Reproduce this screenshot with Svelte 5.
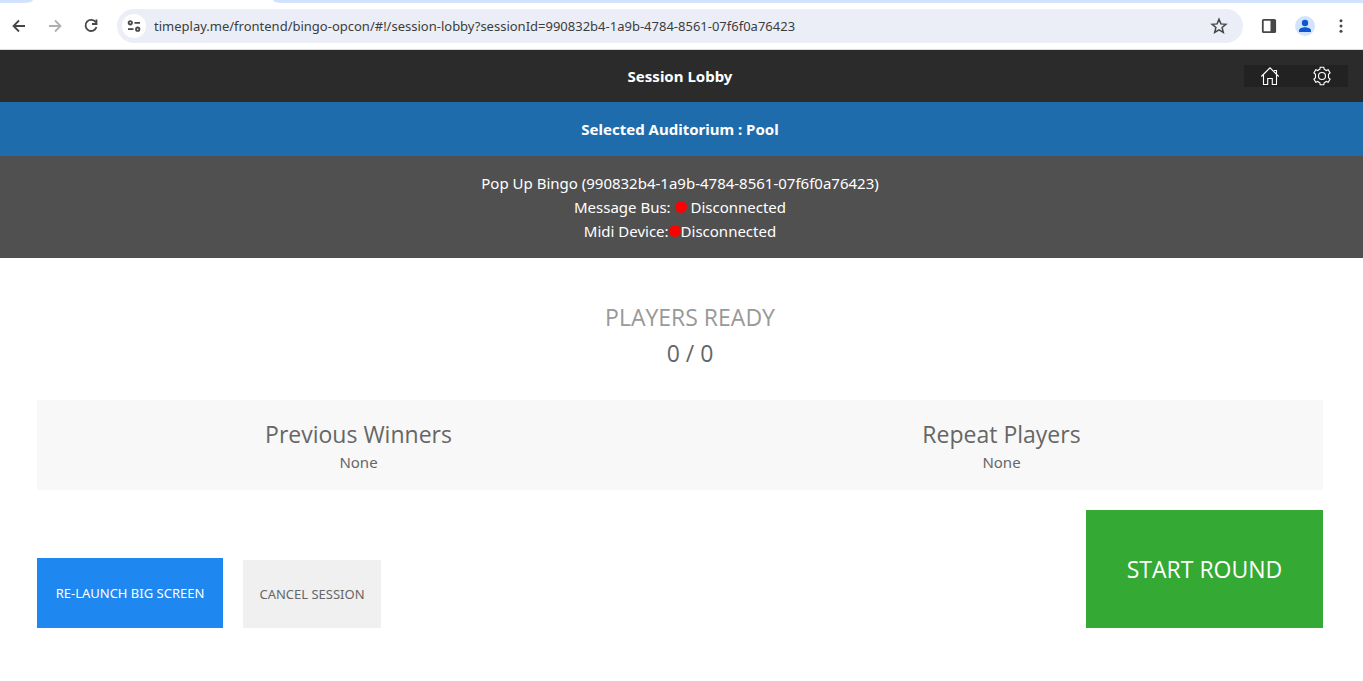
<script>
  const sessionId = '990832b4-1a9b-4784-8561-07f6f0a76423';
  const auditorium = 'Pool';
  const groups = [
    { title: 'Previous Winners', value: 'None' },
    { title: 'Repeat Players', value: 'None' }
  ];
  let url = $state(`timeplay.me/frontend/bingo-opcon/#!/session-lobby?sessionId=${sessionId}`);
</script>

<div class="browser">
  <div class="tabs">
    <div class="tab before"></div>
    <div class="tab current"></div>
    <div class="tab after"></div>
  </div>
  <div class="toolbar">
    <div class="nav">
      <button aria-label="Back">
        <svg width="16" height="16" viewBox="0 0 16 16"><path d="M14 8H3M8 2.5 2.5 8 8 13.5" /></svg>
      </button>
      <button aria-label="Forward" class="dim">
        <svg width="16" height="16" viewBox="0 0 16 16"><path d="M2 8h11M8 2.5 13.5 8 8 13.5" /></svg>
      </button>
      <button aria-label="Reload">
        <svg width="16" height="16" viewBox="0 0 16 16"><path d="M12.8 4.3A5.6 5.6 0 1 0 13.5 9M13.5 1.5V6H9" /></svg>
      </button>
    </div>
    <div class="address">
      <button class="site" aria-label="View site information">
        <svg width="14" height="14" viewBox="0 0 14 14"><circle cx="3.3" cy="3.8" r="1.7" /><path d="M7.5 3.8H13M1 10.2h5.5" /><circle cx="10.7" cy="10.2" r="1.7" /></svg>
      </button>
      <input type="text" aria-label="Address" spellcheck="false" bind:value={url} />
      <button class="star" aria-label="Bookmark this tab">
        <svg width="18" height="18" viewBox="0 0 18 18"><path d="m9 2.2 1.9 4.7 5 .4-3.8 3.2 1.2 4.9L9 12.8l-4.3 2.6 1.2-4.9L2.1 7.3l5-.4z" /></svg>
      </button>
    </div>
    <div class="tools">
      <button aria-label="Side panel">
        <svg width="16" height="16" viewBox="0 0 16 16"><rect x="1.8" y="1.8" width="12.4" height="12.4" rx="0.8" /><path class="solid" d="M9.5 2h4.5v12H9.5z" /></svg>
      </button>
      <button aria-label="Profile">
        <svg width="20" height="20" viewBox="0 0 20 20"><circle class="halo" cx="10" cy="10" r="10" /><circle class="person" cx="10" cy="7" r="3.2" /><path class="person" d="M4 16v-1.5c0-2.300 3.500-3.300 6-3.300s6 1 6 3.300V16z" /></svg>
      </button>
      <button aria-label="Menu">
        <svg width="16" height="16" viewBox="0 0 16 16"><circle class="dot3" cx="8" cy="2.700" r="1.500" /><circle class="dot3" cx="8" cy="8" r="1.500" /><circle class="dot3" cx="8" cy="13.300" r="1.500" /></svg>
      </button>
    </div>
  </div>
</div>

<header>
  <h1>Session Lobby</h1>
  <nav>
    <button aria-label="Home">
      <svg width="20" height="20" viewBox="0 0 20 20"><path d="M1.300 10.500 10 1.800l8.700 8.700M3.500 9v9.500h4.200v-6h4.600v6h4.200V9M14 4.500h2.500v3.500" /></svg>
    </button>
    <button aria-label="Settings">
      <svg width="20" height="20" viewBox="0 0 20 20"><circle cx="10" cy="10" r="3.500" /><path d="M7.800 3.300 8.200 1.300h3.600l.4 2q1 .4 2 1.200l2-.8 1.900 3.200-1.600 1.400v3.400l1.600 1.400-1.900 3.200-2-.8q-1 .8-2 1.200l-.4 2H8.200l-.4-2q-1-.4-2-1.200l-2 .8-1.900-3.200 1.600-1.400V8.300L1.900 6.900l1.900-3.200 2 .8q1-.8 2-1.200z" /></svg>
    </button>
  </nav>
</header>

<h2 class="auditorium">Selected Auditorium : {auditorium}</h2>

<section class="status">
  <div>Pop Up Bingo ({sessionId})</div>
  <div>Message Bus: <i class="light"></i> Disconnected</div>
  <div>Midi Device:<i class="light"></i>Disconnected</div>
</section>

<main>
  <section class="ready">
    <h2>PLAYERS READY</h2>
    <p>0 / 0</p>
  </section>

  <section class="groups">
    {#each groups as group}
      <div>
        <h3>{group.title}</h3>
        <p>{group.value}</p>
      </div>
    {/each}
  </section>

  <div class="actions">
    <button class="relaunch">RE-LAUNCH BIG SCREEN</button>
    <button class="cancel">CANCEL SESSION</button>
    <button class="start">START ROUND</button>
  </div>
</main>

<style>
  :global(body) {
    background: #fff;
    color: #666;
    font: 15px/24px 'Segoe UI', 'Noto Sans', 'Open Sans', sans-serif;
  }
  h1, h2, h3, p { margin: 0; font-weight: 400; }
  button {
    border: 0;
    padding: 0;
    background: none;
    color: inherit;
    font: inherit;
    cursor: pointer;
  }
  svg { display: block; fill: none; stroke: currentColor; stroke-width: 1.8; }

  .browser { color: #474747; background: #fff; border-bottom: 1px solid #dcdcdc; }
  .tabs { display: flex; height: 3px; background: #fff; }
  .tab { background: #d3e3fd; }
  .before { width: 33px; border-bottom-right-radius: 8px 3px; }
  .current { width: 240px; background: #fff; }
  .after { flex: 1; border-bottom-left-radius: 8px 3px; }
  .toolbar {
    display: flex;
    align-items: center;
    height: 46px;
    box-sizing: border-box;
    padding: 0 14px 0 11px;
  }
  .nav { display: flex; gap: 20px; }
  .dim { color: #b0b0b0; }
  .address {
    display: flex;
    align-items: center;
    flex: 1;
    height: 34px;
    margin: 0 18px;
    padding: 0 15px 0 5px;
    box-sizing: border-box;
    border-radius: 17px;
    background: #ebeef7;
  }
  .site {
    display: grid;
    place-items: center;
    width: 24px;
    height: 24px;
    border-radius: 50%;
    background: #fff;
  }
  input {
    flex: 1;
    min-width: 0;
    border: 0;
    padding: 0 8px;
    outline: 0;
    background: none;
    color: #3c3d40;
    font: 13px/20px 'Segoe UI', 'Noto Sans', 'Open Sans', sans-serif;
  }
  .star svg { stroke-width: 1.5; }
  .tools { display: flex; align-items: center; gap: 18px; }
  .solid, .dot3 { fill: currentColor; stroke: none; }
  .halo { fill: #d3e3fd; stroke: none; }
  .person { fill: #0b57d0; stroke: none; }

  header {
    display: grid;
    grid-template-columns: 1fr auto 1fr;
    align-items: center;
    height: 52px;
    padding: 0 15px 0 12px;
    background: #2b2b2b;
    color: #fff;
  }
  h1 { grid-column: 2; font-size: 15px; font-weight: 700; }
  nav { display: flex; justify-self: end; background: #222; }
  nav button { display: grid; place-items: center; width: 52px; height: 22px; }
  nav svg { stroke-width: 1.1; }

  .auditorium {
    padding: 15px 3px 15px 0;
    background: #1f6cad;
    color: #fff;
    font-size: 15px;
    font-weight: 700;
    text-align: center;
  }
  .status {
    padding: 15px 3px 15px 0;
    background: #505050;
    color: #fff;
    text-align: center;
  }
  .light {
    display: inline-block;
    width: 12px;
    height: 12px;
    border-radius: 50%;
    background: #f00;
  }

  main { padding: 41px 40px 53px 37px; }
  .ready, h3, .start { font-family: 'Segoe UI', 'Open Sans', 'Noto Sans', sans-serif; }
  .ready { padding-left: 20px; font-size: 23px; line-height: 36px; text-align: center; }
  .ready h2 { color: #999; font-size: 23px; }
  .groups {
    display: grid;
    grid-template-columns: 1fr 1fr;
    margin: 29px 0 20px;
    padding: 18px 0 16px;
    background: #f8f8f8;
    text-align: center;
  }
  h3 { font-size: 23px; line-height: 32px; }
  .actions { display: flex; align-items: flex-end; gap: 20px; }
  .relaunch, .cancel { font-size: 13px; }
  .relaunch { width: 186px; height: 70px; background: #1e87f0; color: #fff; }
  .cancel { width: 138px; height: 68px; background: #f0f0f0; }
  .start {
    width: 237px;
    height: 118px;
    margin-left: auto;
    background: #34a934;
    color: #fff;
    font-size: 23px;
  }
</style>
